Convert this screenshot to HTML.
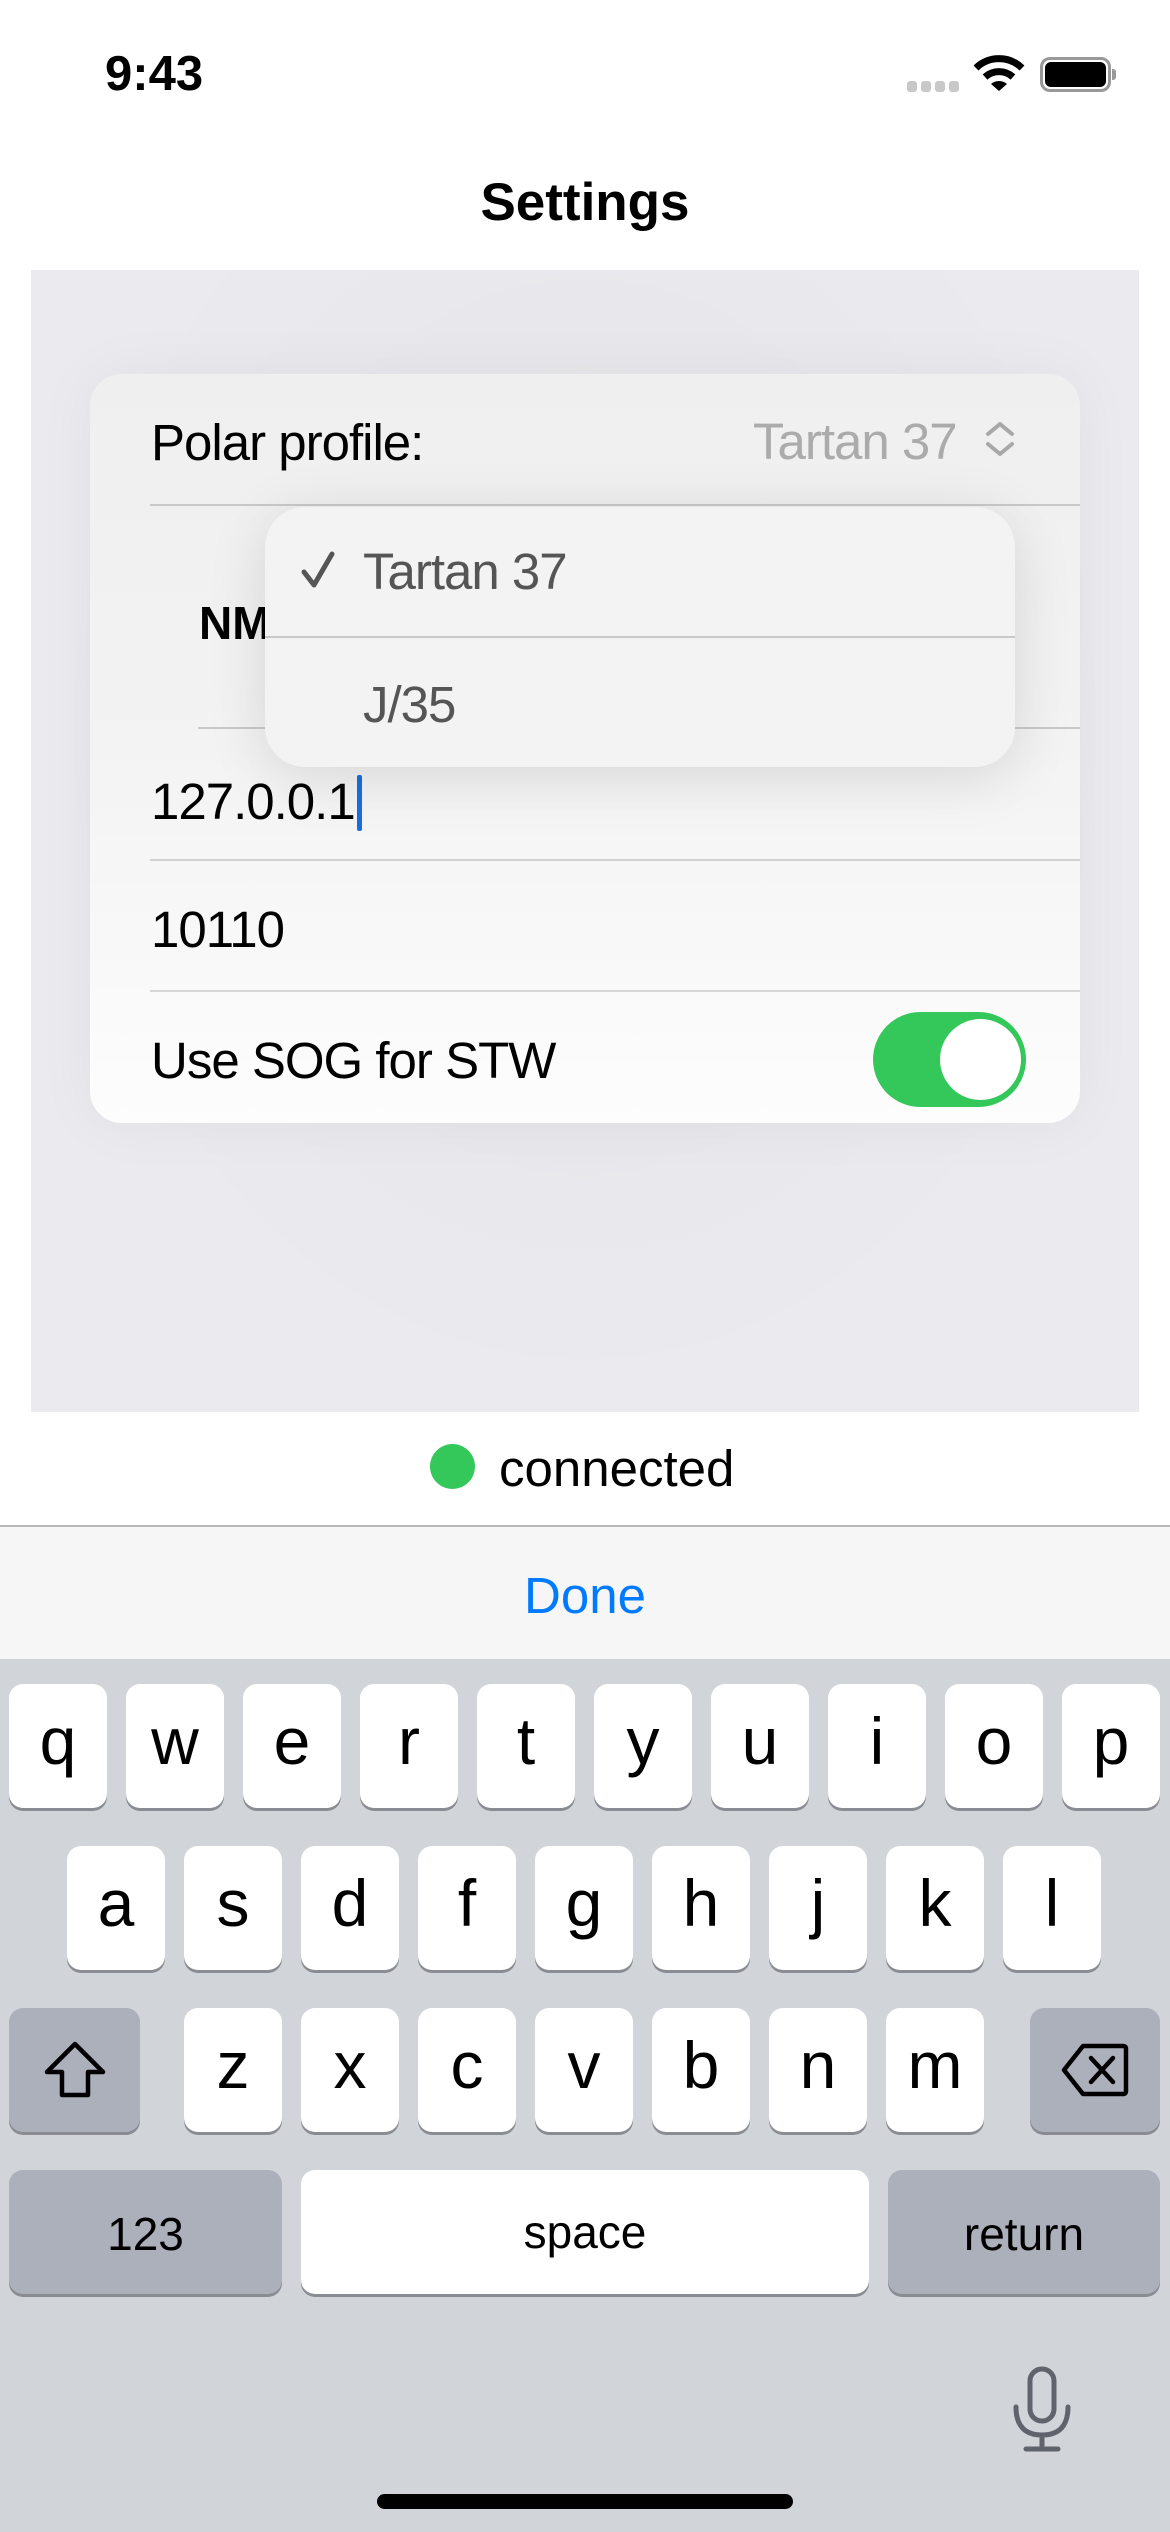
<!DOCTYPE html>
<html><head><meta charset="utf-8"><style>
*{margin:0;padding:0;box-sizing:border-box}
body{width:1170px;height:2532px;position:relative;background:#fff;font-family:"Liberation Sans",sans-serif;overflow:hidden}
.abs{position:absolute}
.t{position:absolute;white-space:nowrap;line-height:1}
.b{font-size:51px;letter-spacing:-1px}
.key{position:absolute;height:124px;background:#fff;border-radius:14px;box-shadow:0 3px 0 #898c92;font-size:66px;color:#000;display:flex;align-items:center;justify-content:center;padding-bottom:10px}
.sp{background:#abb0ba}
.w{font-size:46px;padding-bottom:0;padding-top:4px}
</style></head><body>
<!-- status bar -->
<div class="t" style="left:105px;top:50px;font-size:49px;font-weight:bold">9:43</div>
<div class="abs" style="left:907px;top:81px;width:10px;height:11px;border-radius:3px;background:#c8c8c8"></div>
<div class="abs" style="left:921px;top:81px;width:10px;height:11px;border-radius:3px;background:#c8c8c8"></div>
<div class="abs" style="left:935px;top:81px;width:10px;height:11px;border-radius:3px;background:#c8c8c8"></div>
<div class="abs" style="left:949px;top:81px;width:10px;height:11px;border-radius:3px;background:#c8c8c8"></div>
<svg class="abs" style="left:973px;top:54px" width="52" height="38" viewBox="0 0 52 38"><path d="M3 14 A33 33 0 0 1 49 14" stroke="#000" stroke-width="7" fill="none"/><path d="M12 23 A21 21 0 0 1 40 23" stroke="#000" stroke-width="7" fill="none"/><path d="M18 30 L26 37 L34 30 A12 12 0 0 0 18 30Z" fill="#000"/></svg>
<div class="abs" style="left:1040px;top:57px;width:71px;height:35px;border:3px solid #999;border-radius:10px"></div>
<div class="abs" style="left:1045px;top:62px;width:61px;height:25px;background:#000;border-radius:6px"></div>
<div class="abs" style="left:1112px;top:69px;width:4px;height:11px;background:#999;border-radius:0 3px 3px 0"></div>
<div class="t" style="left:0;width:1170px;text-align:center;top:176px;font-size:53px;font-weight:bold">Settings</div>
<!-- gray area -->
<div class="abs" style="left:31px;top:270px;width:1108px;height:1142px;background:#ebebef"></div>
<div class="abs" style="left:31px;top:270px;width:1108px;height:1142px;background:radial-gradient(ellipse at 50% 40%,rgba(0,0,0,0.03),rgba(255,255,255,0) 70%)"></div>
<!-- card -->
<div class="abs" style="left:90px;top:374px;width:990px;height:749px;background:linear-gradient(#efefef,#f3f3f3 50%,#fdfdfd);border-radius:32px;box-shadow:0 0 60px rgba(0,0,0,0.05)"></div>
<div class="t b" style="left:151px;top:417px">Polar profile:</div>
<div class="t b" style="left:753px;top:416px;color:#ababab">Tartan 37</div>
<svg class="abs" style="left:984px;top:421px" width="32" height="36" viewBox="0 0 32 36"><path d="M4 13 L16 3 L28 13 M4 23 L16 33 L28 23" stroke="#a8a8a8" stroke-width="4" fill="none" stroke-linecap="round" stroke-linejoin="round"/></svg>
<div class="abs" style="left:150px;top:504px;width:930px;height:2px;background:#c9c9c9"></div>
<div class="t" style="left:199px;top:600px;font-size:46px;font-weight:bold">NM</div>
<div class="abs" style="left:198px;top:727px;width:882px;height:2px;background:#c9c9c9"></div>
<div class="t b" style="left:151px;top:775px">127.0.0.1<span style="display:inline-block;width:5px;height:56px;background:#1a6fe0;border-radius:2px;vertical-align:-12px;margin-left:2px"></span></div>
<div class="abs" style="left:150px;top:859px;width:930px;height:2px;background:#d2d2d2"></div>
<div class="t b" style="left:151px;top:904px">10110</div>
<div class="abs" style="left:150px;top:990px;width:930px;height:2px;background:#d6d6d6"></div>
<div class="t b" style="left:151px;top:1035px">Use SOG for STW</div>
<div class="abs" style="left:873px;top:1012px;width:153px;height:95px;border-radius:48px;background:#34c759"></div>
<div class="abs" style="left:936px;top:1015px;width:89px;height:89px;border-radius:50%;background:#fff;border:4px solid #34c759"></div>
<!-- menu -->
<div class="abs" style="left:265px;top:507px;width:750px;height:260px;background:#f3f3f3;border-radius:40px;box-shadow:0 10px 60px rgba(0,0,0,0.12)"></div>
<svg class="abs" style="left:300px;top:550px" width="36" height="40" viewBox="0 0 36 40"><path d="M4 22 L14 35 L32 4" stroke="#555" stroke-width="5" fill="none" stroke-linecap="round" stroke-linejoin="round"/></svg>
<div class="t b" style="left:363px;top:546px;color:#555">Tartan 37</div>
<div class="abs" style="left:265px;top:636px;width:750px;height:2px;background:#c9c9c9"></div>
<div class="t b" style="left:363px;top:679px;color:#555">J/35</div>
<!-- connected -->
<div class="abs" style="left:430px;top:1444px;width:45px;height:45px;border-radius:50%;background:#34c759"></div>
<div class="t" style="left:499px;top:1443px;font-size:51px">connected</div>
<!-- toolbar -->
<div class="abs" style="left:0;top:1525px;width:1170px;height:2px;background:#b8b8b8"></div>
<div class="abs" style="left:0;top:1527px;width:1170px;height:132px;background:#f6f6f6"></div>
<div class="t" style="left:0;width:1170px;text-align:center;top:1570px;font-size:51px;color:#007aff">Done</div>
<!-- keyboard -->
<div class="abs" style="left:0;top:1659px;width:1170px;height:873px;background:#d1d4d9"></div>
<div class="key" style="left:9px;top:1684px;width:98px">q</div>
<div class="key" style="left:126px;top:1684px;width:98px">w</div>
<div class="key" style="left:243px;top:1684px;width:98px">e</div>
<div class="key" style="left:360px;top:1684px;width:98px">r</div>
<div class="key" style="left:477px;top:1684px;width:98px">t</div>
<div class="key" style="left:594px;top:1684px;width:98px">y</div>
<div class="key" style="left:711px;top:1684px;width:98px">u</div>
<div class="key" style="left:828px;top:1684px;width:98px">i</div>
<div class="key" style="left:945px;top:1684px;width:98px">o</div>
<div class="key" style="left:1062px;top:1684px;width:98px">p</div>
<div class="key" style="left:67px;top:1846px;width:98px">a</div>
<div class="key" style="left:184px;top:1846px;width:98px">s</div>
<div class="key" style="left:301px;top:1846px;width:98px">d</div>
<div class="key" style="left:418px;top:1846px;width:98px">f</div>
<div class="key" style="left:535px;top:1846px;width:98px">g</div>
<div class="key" style="left:652px;top:1846px;width:98px">h</div>
<div class="key" style="left:769px;top:1846px;width:98px">j</div>
<div class="key" style="left:886px;top:1846px;width:98px">k</div>
<div class="key" style="left:1003px;top:1846px;width:98px">l</div>
<div class="key sp" style="left:9px;top:2008px;width:131px;padding:0"><svg width="64" height="58" viewBox="0 0 64 58"><path d="M32 3 L60 31 L45 31 L45 54 L19 54 L19 31 L4 31 Z" stroke="#000" stroke-width="4.5" fill="none" stroke-linejoin="round"/></svg></div>
<div class="key" style="left:184px;top:2008px;width:98px">z</div>
<div class="key" style="left:301px;top:2008px;width:98px">x</div>
<div class="key" style="left:418px;top:2008px;width:98px">c</div>
<div class="key" style="left:535px;top:2008px;width:98px">v</div>
<div class="key" style="left:652px;top:2008px;width:98px">b</div>
<div class="key" style="left:769px;top:2008px;width:98px">n</div>
<div class="key" style="left:886px;top:2008px;width:98px">m</div>
<div class="key sp" style="left:1030px;top:2008px;width:130px;padding:0"><svg width="68" height="54" viewBox="0 0 68 54"><path d="M22 3 L62 3 Q65 3 65 6 L65 48 Q65 51 62 51 L22 51 L3 27 Z" stroke="#000" stroke-width="4.5" fill="none" stroke-linejoin="round"/><path d="M30 15 L52 39 M52 15 L30 39" stroke="#000" stroke-width="4.5" stroke-linecap="round"/></svg></div>
<div class="key sp w" style="left:9px;top:2170px;width:273px">123</div>
<div class="key w" style="left:301px;top:2170px;width:568px;padding-top:0">space</div>
<div class="key sp w" style="left:888px;top:2170px;width:272px">return</div>
<svg class="abs" style="left:1010px;top:2365px" width="64" height="90" viewBox="0 0 64 90"><rect x="20" y="4" width="24" height="52" rx="12" stroke="#5f636b" stroke-width="5" fill="none"/><path d="M6 42 Q6 70 32 70 Q58 70 58 42 M32 70 L32 84 M16 84 L48 84" stroke="#5f636b" stroke-width="5" fill="none" stroke-linecap="round"/></svg>
<div class="abs" style="left:377px;top:2494px;width:416px;height:15px;border-radius:8px;background:#000"></div>
</body></html>
